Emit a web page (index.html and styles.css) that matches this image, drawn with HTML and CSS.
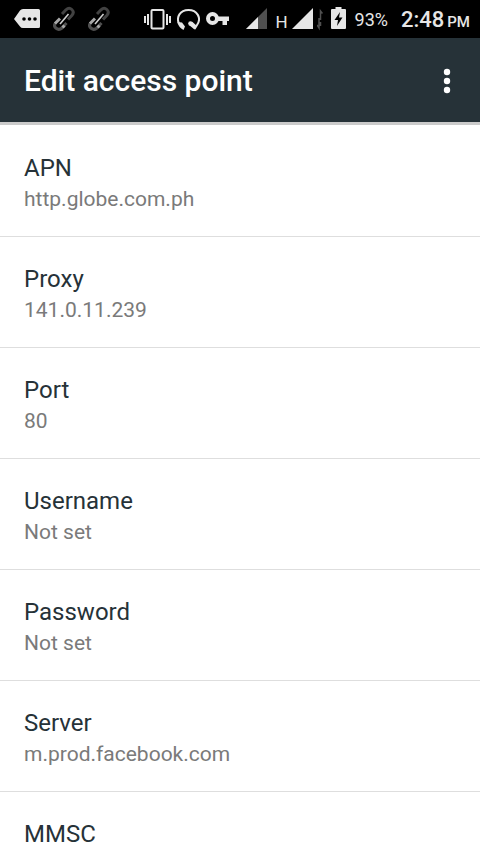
FILE: index.html
```html
<!DOCTYPE html>
<html lang="en">
<head>
<meta charset="utf-8">
<meta name="viewport" content="width=device-width, initial-scale=1">
<title>Edit access point</title>
<link rel="stylesheet" href="styles.css">
</head>
<body>
<div class="status">
  <div class="notifications">
    <svg width="26" height="38" viewBox="0 0 26 38" aria-hidden="true"><path fill="#e6e6e6" d="M0 19 6 10.500Q7 9 9 9H24.500Q26 9 26 10.500V26.500Q26 28 24.500 28H9Q7 28 6 26.500Z"/><g fill="#000"><circle cx="10" cy="19" r="1.800"/><circle cx="15.500" cy="19" r="1.800"/><circle cx="21" cy="19" r="1.800"/></g></svg>
    <svg width="22" height="38" viewBox="0 0 22 38" aria-hidden="true"><use href="#link"/></svg>
    <svg width="22" height="38" viewBox="0 0 22 38" aria-hidden="true"><g id="link" fill="none"><path stroke="#424242" stroke-width="3" d="M9 14 13 9.800C17 6 22.500 11 19 15.200L15 19.500"/><path stroke="#505050" stroke-width="3" d="M13.500 23 9 28C5 31.500-.5 27 2.500 22.800"/><path stroke="#a8a8a8" stroke-width="3" d="M2 23.500 7 18.500M9.500 27.500 11.500 25.500"/><path stroke="#d0d0d0" stroke-width="1.600" d="M7 24 15.500 14"/></g></svg>
  </div>
  <div class="system">
    <svg width="27" height="38" viewBox="0 0 27 38" aria-hidden="true"><rect x="7.500" y="10" width="12" height="18.500" rx="1" fill="none" stroke="#e6e6e6" stroke-width="2"/><path stroke="#e6e6e6" stroke-width="2" d="M1 16V23M4 14V25M23 14V25M26 16V23"/></svg>
    <svg class="headset" width="23" height="38" viewBox="0 0 23 38" aria-hidden="true"><path fill="none" stroke="#e6e6e6" stroke-width="2" d="M2 24C-1 17 3 10 11.500 10S25 18 20 25L17.500 29"/><path fill="#e6e6e6" d="M.5 22 5 22.500 8 26.500 6.500 30Q1.500 27.500 .5 22ZM12.500 22 15.500 22 20 26 17.500 29.500 12 25Z"/><circle cx="13.500" cy="23.500" r="2.300" fill="#e6e6e6"/></svg>
    <svg class="key" width="23" height="38" viewBox="0 0 23 38" aria-hidden="true"><circle cx="6.500" cy="18.500" r="4.500" fill="none" stroke="#e6e6e6" stroke-width="4"/><path fill="#e6e6e6" d="M11 16.500H23V21H21V25H16.500V21H11Z"/></svg>
    <svg class="signal" width="21" height="38" viewBox="0 0 21 38" aria-hidden="true"><path fill="#505050" d="M0 29 21 8V29Z"/><path fill="#e6e6e6" d="M0 29 12 17V29Z"/></svg>
    <span class="network">H</span>
    <svg width="21" height="38" viewBox="0 0 21 38" aria-hidden="true"><path fill="#e6e6e6" d="M0 29 21 8V29Z"/></svg>
    <svg class="traffic" width="6" height="38" viewBox="0 0 6 38" aria-hidden="true"><path fill="none" stroke="#505050" stroke-width="1.500" d="M3.500 20V11L5.500 13.500M2 18V28L0 25M3.500 22V26"/></svg>
    <svg class="battery" width="15" height="38" viewBox="0 0 15 38" aria-hidden="true"><path fill="#e6e6e6" d="M4.500 7H10.500V9H14Q15 9 15 10V28Q15 29 14 29H1Q0 29 0 28V10Q0 9 1 9H4.500Z"/><path fill="#000" d="M9 12 3.500 20H7L6 26 11.500 17.500H8Z"/></svg>
    <span class="percent">93%</span>
    <span class="clock">2:48</span>
    <span class="meridiem">PM</span>
  </div>
</div>
<header class="bar">
  <h1>Edit access point</h1>
  <button class="more" type="button" aria-label="More options"><svg width="8" height="26" viewBox="0 0 8 26" aria-hidden="true"><g fill="#fff"><circle cx="4" cy="4" r="3.200"/><circle cx="4" cy="13" r="3.200"/><circle cx="4" cy="22" r="3.200"/></g></svg></button>
</header>
<main class="list">
  <button class="row" type="button"><span class="name">APN</span><span class="value">http.globe.com.ph</span></button>
  <button class="row" type="button"><span class="name">Proxy</span><span class="value">141.0.11.239</span></button>
  <button class="row" type="button"><span class="name">Port</span><span class="value">80</span></button>
  <button class="row" type="button"><span class="name">Username</span><span class="value">Not set</span></button>
  <button class="row" type="button"><span class="name">Password</span><span class="value">Not set</span></button>
  <button class="row" type="button"><span class="name">Server</span><span class="value">m.prod.facebook.com</span></button>
  <button class="row" type="button"><span class="name">MMSC</span></button>
</main>
</body>
</html>
```

FILE: styles.css
```css
* {
  box-sizing: border-box;
}

body {
  margin: 0;
  height: 100vh;
  display: flex;
  flex-direction: column;
  overflow: hidden;
  background: #fff;
  color: #263238;
  font-family: Roboto, sans-serif;
}

svg {
  display: block;
  flex: none;
}

.status {
  flex: none;
  display: flex;
  justify-content: space-between;
  height: 38px;
  padding: 0 10px 0 14px;
  background: #000;
  color: #e6e6e6;
}

.notifications {
  display: flex;
  gap: 13px;
}

.system {
  display: flex;
  line-height: 40px;
}

.headset,
.key {
  margin-left: 6px;
}

.signal {
  margin-left: 17px;
}

.network {
  margin: 2px 4px 0 8px;
  font-size: 17px;
}

.traffic {
  margin-left: 4px;
}

.battery {
  margin: 0 9px 0 8px;
}

.percent {
  font-size: 18px;
}

.clock {
  margin-left: 13px;
  font-size: 22px;
  font-weight: 500;
}

.meridiem {
  margin: 2px 0 0 3px;
  font-size: 15px;
  font-weight: 500;
}

.bar {
  flex: none;
  display: flex;
  align-items: center;
  justify-content: space-between;
  height: 84px;
  padding: 1px 17px 0 24px;
  background: #263238;
  color: #fff;
}

h1 {
  margin: 0;
  font-size: 30px;
  font-weight: 500;
  line-height: 36px;
}

.more {
  padding: 12px;
  border: 0;
  background: none;
}

.list {
  flex: 1;
  min-height: 0;
  overflow-y: auto;
  scrollbar-width: none;
  border-top: 3px solid #cbcbcb;
  padding-top: 1px;
}

.row {
  display: block;
  width: 100%;
  padding: 26px 24px 22px;
  border: 0;
  border-bottom: 1px solid #dedede;
  background: none;
  color: inherit;
  font: inherit;
  text-align: left;
}

.name,
.value {
  display: block;
}

.name {
  font-size: 24px;
  line-height: 32px;
}

.value {
  color: #7a7a7a;
  font-size: 21px;
  line-height: 30px;
}
```
